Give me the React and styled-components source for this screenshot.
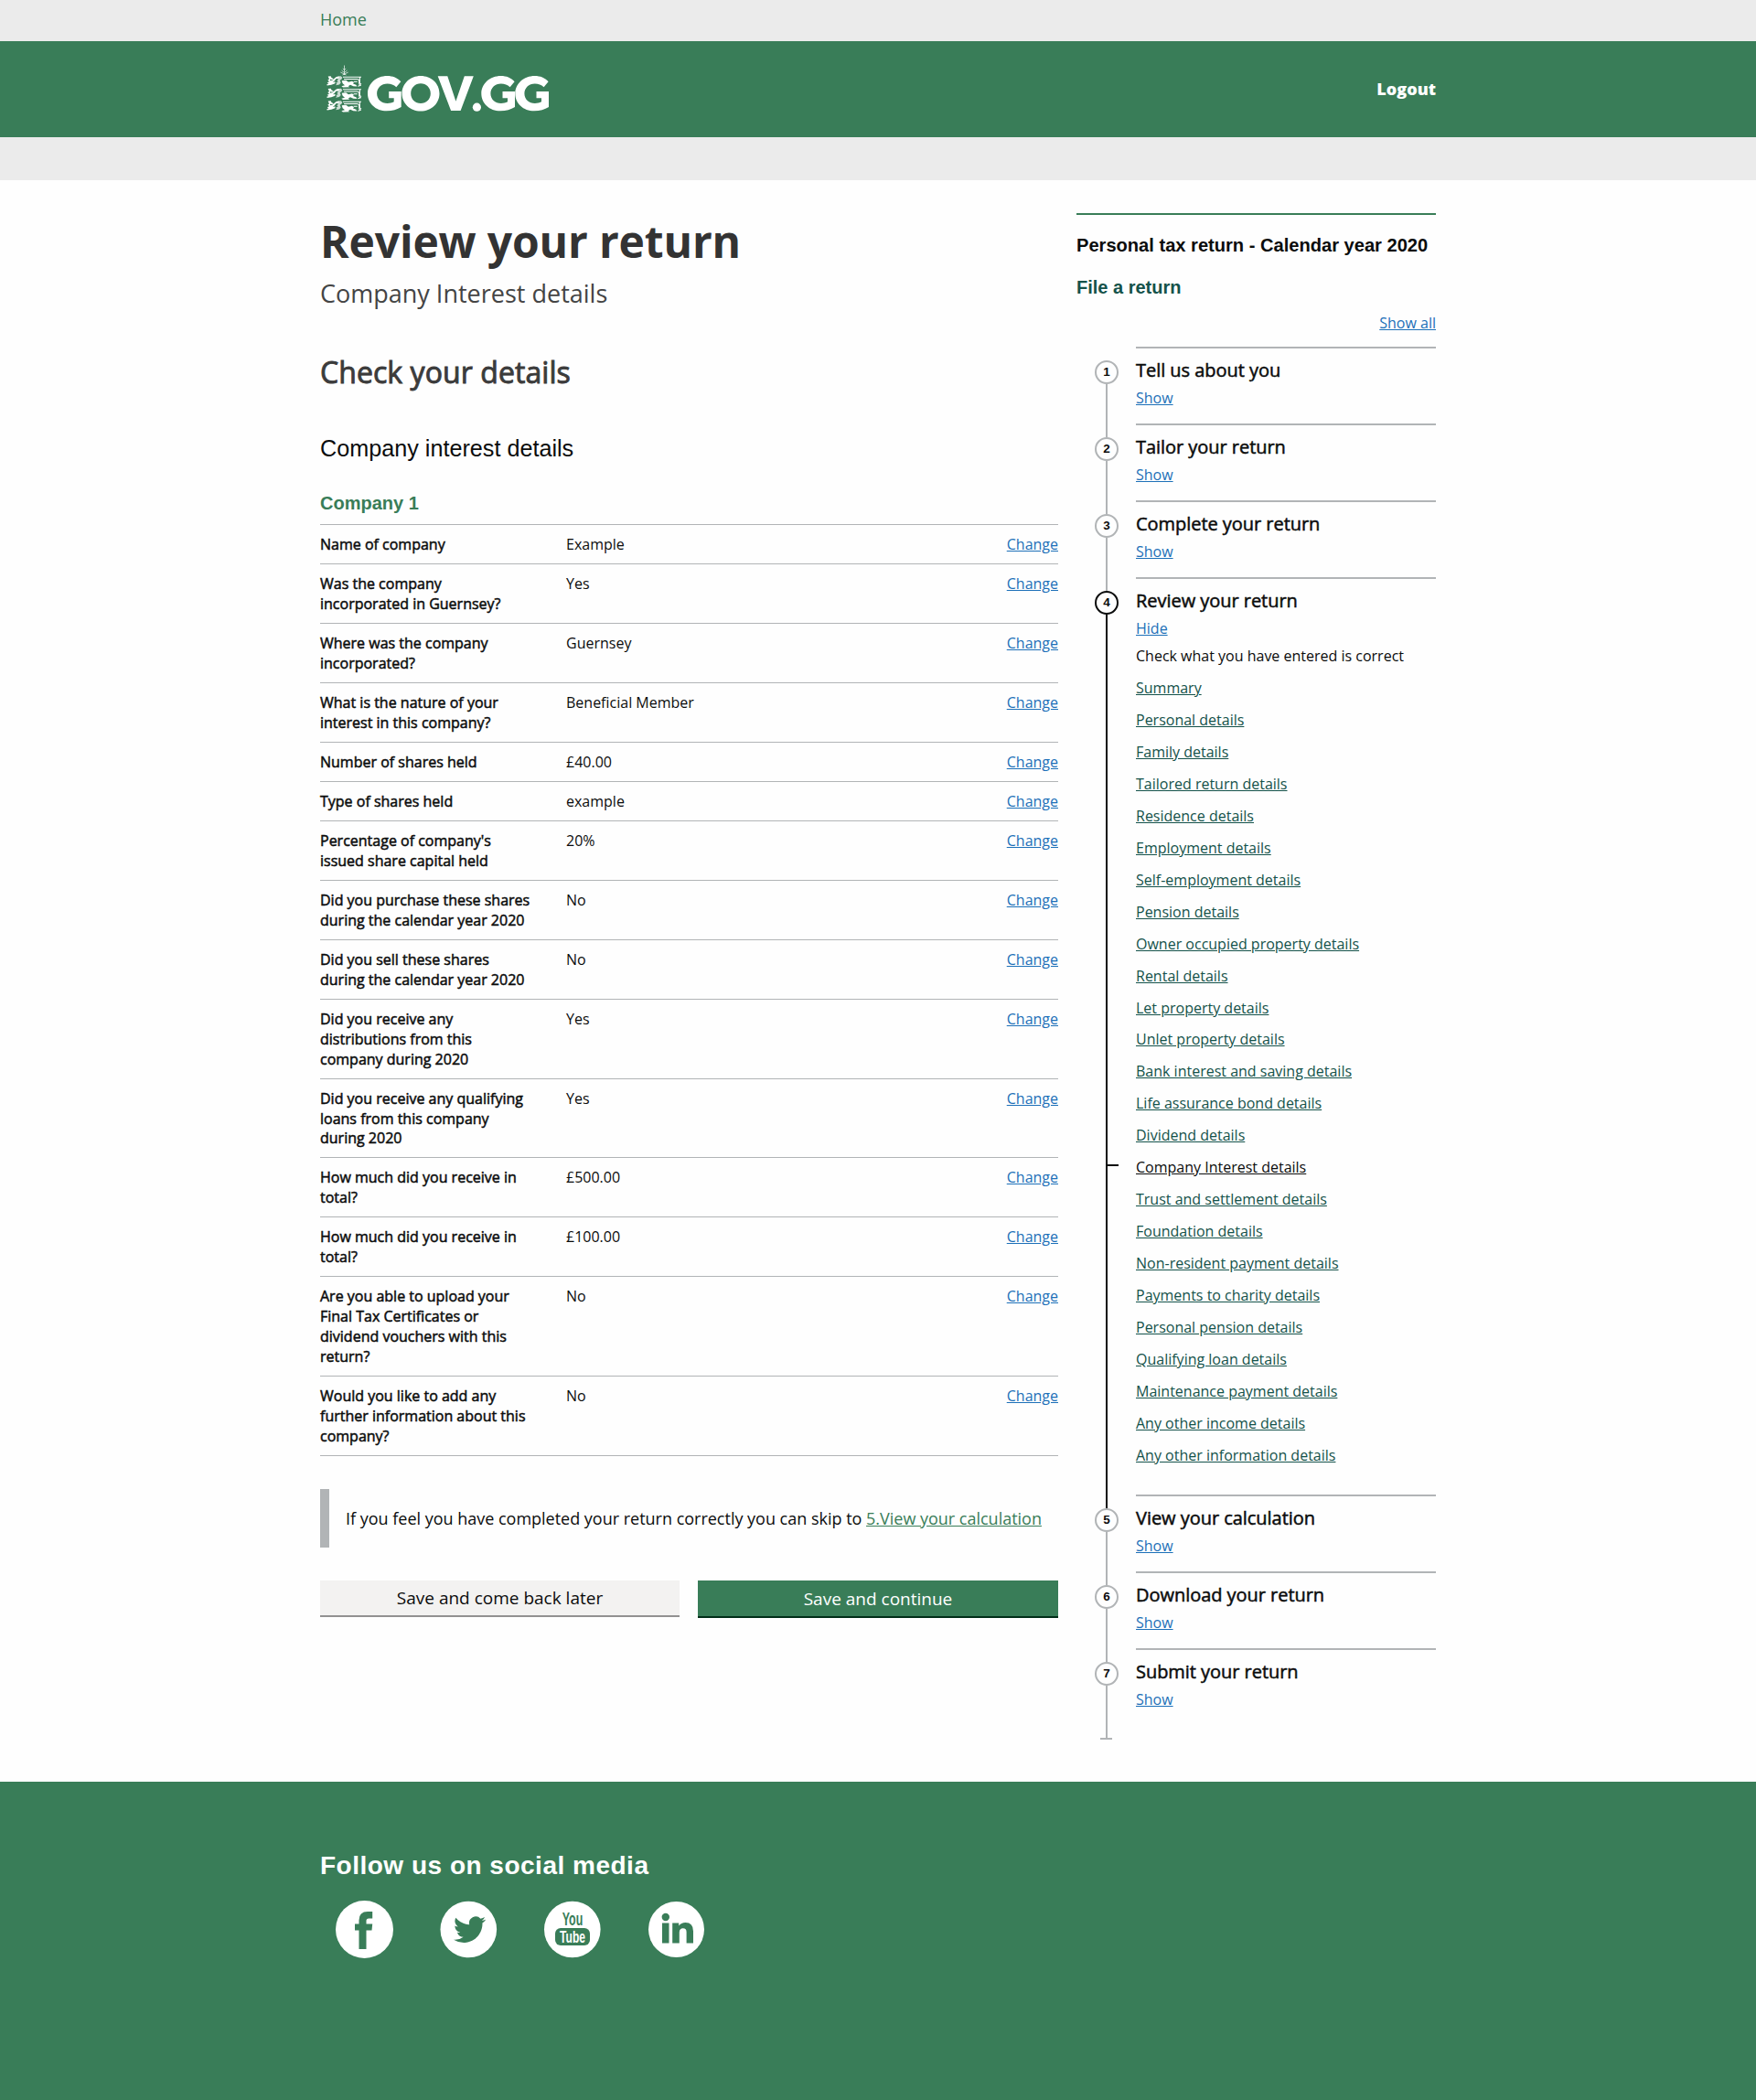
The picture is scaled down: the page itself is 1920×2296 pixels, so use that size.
import React from 'react';
import styled, { createGlobalStyle, css } from 'styled-components';

const green = '#397d58';
const grey = '#b1b4b6';
const sans = "'Open Sans', 'Noto Sans', sans-serif";
const arial = "'Liberation Sans', Arial, sans-serif";

const GlobalStyle = createGlobalStyle`
  * { box-sizing: border-box; }
  body { margin: 0; background: #fefefe; color: #0b0c0c; font-family: ${sans}; }
  h1, h2, h3, p, ul, ol, dl, dd, dt { margin: 0; padding: 0; font-weight: 400; }
  ol, ul { list-style: none; }
  a { color: inherit; }
`;

const heavier = css`-webkit-text-stroke: 0.5px currentColor;`;

const Container = styled.div`width: 1220px; margin: 0 auto;`;
const TopBar = styled.nav`height: 45px; background: #ebebeb;`;
const HomeLink = styled.a`
  display: block; padding-top: 9px; font-size: 18px; line-height: 25px;
  color: ${green}; text-decoration: none;
`;
const Header = styled.header`height: 105px; background: ${green};`;
const HeaderRow = styled(Container)`display: flex; justify-content: space-between; height: 105px;`;
const Brand = styled.svg`width: 255px; height: 105px; display: block;`;
const Logout = styled.a`
  padding-top: 40px; color: #fff; font-size: 18px; font-weight: 800;
  line-height: 25px; text-decoration: none;
`;
const SubBar = styled.div`height: 47px; background: #ebebeb;`;

const Columns = styled(Container)`
  display: grid; grid-template-columns: 807px 393px; column-gap: 20px; height: 1751px;
`;
const Main = styled.main`padding-top: 35px;`;
const Title = styled.h1`
  font-size: 48px; line-height: 64px; letter-spacing: -0.15px; color: #333; && { font-weight: 700; }
`;
const Caption = styled.p`margin-top: 7px; font-size: 27px; line-height: 36px; color: #444;`;
const Subtitle = styled.h2`
  margin-top: 46px; font-size: 32px; line-height: 44px; letter-spacing: 0.07px; color: #3b3b3b;
  -webkit-text-stroke: 0.9px currentColor;
`;
const Section = styled.h2`margin-top: 46px; font-family: ${arial}; font-size: 25.2px; line-height: 30px;`;
const Company = styled.h3`
  margin-top: 33px; font-family: ${arial}; font-size: 20px; line-height: 25px;
  color: ${green}; && { font-weight: 700; }
`;
const Summary = styled.dl`margin-top: 10.1px; border-top: 1px solid ${grey};`;
const Row = styled.div`
  display: grid; grid-template-columns: 269px 1fr auto; padding: 11px 0 9px;
  border-bottom: 1px solid ${grey}; font-size: 16px; line-height: 21.97px;
`;
const Key = styled.dt`${heavier} white-space: pre-line;`;
const BlueLink = styled.a`color: #1d70b8; text-decoration: underline;`;
const Inset = styled.p`
  margin-top: 36px; padding: 20px 0 0 18px; height: 64px; border-left: 10px solid ${grey};
  font-size: 18px; line-height: 25px; letter-spacing: -0.01px; white-space: nowrap;
  a { color: ${green}; }
`;
const Buttons = styled.div`margin-top: 36px; display: flex; gap: 20px; align-items: flex-start;`;
const Button = styled.button`
  width: ${p => (p.$primary ? 394 : 393)}px; height: ${p => (p.$primary ? 41 : 40)}px; border: 0;
  padding: ${p => (p.$primary ? 1 : 0)}px 0 0;
  border-bottom: 2px solid ${p => (p.$primary ? '#002d18' : '#929191')};
  background: ${p => (p.$primary ? green : '#f3f2f1')};
  color: ${p => (p.$primary ? '#fff' : '#0b0c0c')};
  font: 19px/25px ${sans};
`;

const Aside = styled.aside`padding-top: 36px;`;
const AsideTitle = styled.h2`
  border-top: 2px solid ${green}; padding-top: 21px; font-family: ${arial};
  font-size: 20.1px; line-height: 25px; white-space: nowrap; && { font-weight: 700; }
`;
const FileReturn = styled.h2`
  margin-top: 21px; font-family: ${arial}; font-size: 20px; line-height: 25px;
  color: #14524a; && { font-weight: 700; }
`;
const ShowAll = styled.p`margin-top: 15px; text-align: right; font-size: 16px; line-height: 22px;`;
const Steps = styled.ol`margin-top: 15px;`;
const Step = styled.li`
  display: grid; grid-template-columns: 65px 1fr; height: ${p => p.$height}px;
`;
const Rail = styled.div`
  display: flex; flex-direction: column; align-items: center; width: 26px; margin-left: 20px;
  padding-top: 15px; height: ${p => p.$height + 15}px;
`;
const Bullet = styled.span`
  flex: none; width: 26px; height: 26px; border-radius: 50%;
  border: 2px solid ${p => (p.$active ? '#0b0c0c' : grey)};
  font: 700 13.5px/22px ${arial}; text-align: center;
`;
const Line = styled.span`flex: 1; width: 2px; background: ${p => (p.$active ? '#0b0c0c' : grey)};`;
const EndCap = styled.span`width: 13px; height: 2px; margin-right: 1px; background: ${grey};`;
const StepBody = styled.div`border-top: 2px solid ${grey};`;
const StepTitle = styled.h3`margin-top: 10px; font-size: 20px; line-height: 28px; letter-spacing: -0.04px; ${heavier}`;
const Toggle = styled(BlueLink)`display: block; width: max-content; margin-top: 5px; font-size: 16px; line-height: 22px;`;
const Hint = styled.p`margin-top: 8px; font-size: 16px; line-height: 22px;`;
const Links = styled.ul`margin-top: 13px; font-size: 16px; line-height: 22px;`;
const LinkItem = styled.li`
  position: relative; height: 34.96px; color: ${p => (p.$current ? '#0b0c0c' : '#14524a')};
  ${p => p.$current && css`
    &::before {
      content: ''; position: absolute; left: -32px; top: 8px; width: 13px; height: 2px; background: #0b0c0c;
    }
  `}
`;

const Footer = styled.footer`height: 348px; background: ${green}; color: #fff; padding-top: 76px;`;
const FooterTitle = styled.h2`
  font-family: ${arial}; font-size: 28px; line-height: 32px; letter-spacing: 0.5px; && { font-weight: 700; }
`;
const Social = styled.div`display: flex; margin: 21px 0 0 16px; gap: 50px;`;
const SocialIcon = styled.svg`width: 64px; height: 64px; display: block;`;

const rows = [
  ['Name of company', 'Example'],
  ['Was the company\nincorporated in Guernsey?', 'Yes'],
  ['Where was the company\nincorporated?', 'Guernsey'],
  ['What is the nature of your\ninterest in this company?', 'Beneficial Member'],
  ['Number of shares held', '£40.00'],
  ['Type of shares held', 'example'],
  ["Percentage of company's\nissued share capital held", '20%'],
  ['Did you purchase these shares\nduring the calendar year 2020', 'No'],
  ['Did you sell these shares\nduring the calendar year 2020', 'No'],
  ['Did you receive any\ndistributions from this\ncompany during 2020', 'Yes'],
  ['Did you receive any qualifying\nloans from this company\nduring 2020', 'Yes'],
  ['How much did you receive in\ntotal?', '£500.00'],
  ['How much did you receive in\ntotal?', '£100.00'],
  ['Are you able to upload your\nFinal Tax Certificates or\ndividend vouchers with this\nreturn?', 'No'],
  ['Would you like to add any\nfurther information about this\ncompany?', 'No'],
];

const links = [
  'Summary', 'Personal details', 'Family details', 'Tailored return details', 'Residence details',
  'Employment details', 'Self-employment details', 'Pension details', 'Owner occupied property details',
  'Rental details', 'Let property details', 'Unlet property details', 'Bank interest and saving details',
  'Life assurance bond details', 'Dividend details', 'Company Interest details',
  'Trust and settlement details', 'Foundation details', 'Non-resident payment details',
  'Payments to charity details', 'Personal pension details', 'Qualifying loan details',
  'Maintenance payment details', 'Any other income details', 'Any other information details',
];

const steps = [
  'Tell us about you', 'Tailor your return', 'Complete your return', 'Review your return',
  'View your calculation', 'Download your return', 'Submit your return',
];

const Lion = ({ y }) => (
  <g transform={`translate(8 ${y}) scale(.3333)`} fill="#fff">
    <path d="M2 3l9-1 2 5 7 4-5 3-5-2-2 5 8-1 12-11 12-2-4 6-8 2-5 7-6 4 9-1-1 5-12 5-14 2-1-4 6-2-5-4 7-3-5-5 5-3z" />
    <path d="M31 4l13-2 5 5-3 6-5 3 3 8-5 6-12 2 4-5-3-3 7-2-4-5 5-4-6-4z" opacity=".75" />
    <path
      d="M51 5h60M54 12h42q8 0 8 6v8q0 5 6 6l-10 3M106 5v20l5 4M86 20h12"
      fill="none" stroke="#fff" strokeWidth="3.200"
    />
    <path d="M47 17l14-1 8 6 12-3 6 4-3 4 10 4 3 5-12-1-10-4-7 4 5 3-22 1-5-4 11-3-7-6z" />
  </g>
);

const LetterG = ({ x }) => (
  <path
    transform={`translate(${x} 0)`}
    fill="#fff"
    d="M36.300 44.300C32.500 40 27.500 38 21.300 38C9.500 38 0 46.500 0 57.200C0 68 8.800 76.300 20.800 76.300C27 76.300 32.300 74.800 36.700 72V55H23.200V62.300H28.700V66.300C26.600 67.500 24.300 68 21.600 68C15 68 10.100 63.500 10.100 57.200C10.100 51 15 46.400 21.500 46.400C25.600 46.400 28.500 47.600 31.300 50.200Z"
  />
);

const Logo = () => (
  <Brand viewBox="0 0 255 105">
    <path
      fill="none" stroke="#fff" strokeWidth=".9" opacity=".75"
      d="M26.500 26.500v10.500M24.800 30l1.700 1.500 1.700-1.500M23.500 32l3 2.500 3-2.500M22.300 34l4.200 2 4.200-2M24.500 37l2-1 2 1"
    />
    <Lion y={37.500} /><Lion y={51} /><Lion y={64.500} />
    <LetterG x={52} />
    <path
      fill="#fff" fillRule="evenodd"
      d="M110 38C121.500 38 130.500 46.300 130.500 57.200S121.500 76.500 110 76.500S89.500 68 89.500 57.200S98.500 38 110 38ZM110 46.300C104 46.300 99.200 51 99.200 57.200S104 68 110 68S120.800 63.500 120.800 57.200S116 46.300 110 46.300Z"
    />
    <path d="M128.700 38.200h10.600l9.100 27.600 9.400-27.600h10l-14.200 37.800h-10.500z" fill="#fff" />
    <circle cx="171.400" cy="72.200" r="4.600" fill="#fff" />
    <LetterG x={176.300} />
    <LetterG x={213.300} />
  </Brand>
);

const Facebook = () => (
  <SocialIcon viewBox="0 0 64 64">
    <circle cx="32.500" cy="32.500" r="31.500" fill="#fff" />
    <path d="M26.500 54V33.500h-4.500v-7h4.500v-4q0-9.500 9.500-9.500h5.200v7.500h-4q-2.700 0-2.700 2.500v3.500h6.700l-.7 7h-6v20.500z" fill={green} />
  </SocialIcon>
);
const Twitter = () => (
  <SocialIcon viewBox="0 0 64 64">
    <circle cx="32.300" cy="32.500" r="30.800" fill="#fff" />
    <path transform="translate(16 15.200) scale(1.46)" fill={green} d="M23.950 4.570a10 10 0 0 1-2.820.77 4.960 4.960 0 0 0 2.160-2.720c-.95.550-2 .950-3.130 1.180a4.920 4.920 0 0 0-8.380 4.480C7.690 8.090 4.070 6.130 1.640 3.160a4.920 4.920 0 0 0 1.520 6.570 4.900 4.900 0 0 1-2.230-.61v.06a4.920 4.920 0 0 0 3.950 4.830 5 5 0 0 1-2.210.08 4.940 4.940 0 0 0 4.600 3.420A9.870 9.870 0 0 1 0 19.540a13.990 13.990 0 0 0 7.550 2.210c9.050 0 14-7.500 14-13.980 0-.21 0-.42-.02-.63a9.940 9.940 0 0 0 2.460-2.550z" />
  </SocialIcon>
);
const CondensedText = styled.text`font-family: ${arial}; font-weight: 700; text-anchor: middle;`;
const YouTube = () => (
  <SocialIcon viewBox="0 0 64 64">
    <circle cx="31.800" cy="32.500" r="30.800" fill="#fff" />
    <CondensedText transform="translate(32 27.700) scale(.62 1)" fontSize="20" fill={green}>You</CondensedText>
    <rect x="13" y="31" width="38" height="19" rx="6" fill={green} />
    <CondensedText transform="translate(32 46.500) scale(.67 1)" fontSize="18" fill="#fff">Tube</CondensedText>
  </SocialIcon>
);
const LinkedIn = () => (
  <SocialIcon viewBox="0 0 64 64">
    <circle cx="31.500" cy="32.500" r="30.500" fill="#fff" />
    <circle cx="19.800" cy="19" r="4.200" fill={green} />
    <path d="M16 25.500h7.500v22h-7.500zM27.200 25.500h7v3q2.500-3.500 7.300-3.500 8.500 0 8.500 9.500v13h-7.400v-12q0-4.200-3.800-4.200-4 0-4 4.500v11.700h-7.600z" fill={green} />
  </SocialIcon>
);

export default function App() {
  return (
    <>
      <GlobalStyle />
      <TopBar><Container><HomeLink>Home</HomeLink></Container></TopBar>
      <Header><HeaderRow><Logo /><Logout>Logout</Logout></HeaderRow></Header>
      <SubBar />
      <Columns>
        <Main>
          <Title>Review your return</Title>
          <Caption>Company Interest details</Caption>
          <Subtitle>Check your details</Subtitle>
          <Section>Company interest details</Section>
          <Company>Company 1</Company>
          <Summary>
            {rows.map(([label, value], i) => (
              <Row key={i}>
                <Key>{label}</Key>
                <dd>{value}</dd>
                <dd><BlueLink>Change</BlueLink></dd>
              </Row>
            ))}
          </Summary>
          <Inset>If you feel you have completed your return correctly you can skip to <a href="#calculation">5.View your calculation</a></Inset>
          <Buttons>
            <Button>Save and come back later</Button>
            <Button $primary>Save and continue</Button>
          </Buttons>
        </Main>
        <Aside>
          <AsideTitle>Personal tax return - Calendar year 2020</AsideTitle>
          <FileReturn>File a return</FileReturn>
          <ShowAll><BlueLink>Show all</BlueLink></ShowAll>
          <Steps>
            {steps.map((name, i) => {
              const active = i === 3;
              const last = i === steps.length - 1;
              const height = active ? 1003 : 84;
              return (
                <Step key={name} $height={height}>
                  <Rail $height={last ? 85 : height}>
                    <Bullet $active={active}>{i + 1}</Bullet>
                    <Line $active={active} />
                    {last && <EndCap />}
                  </Rail>
                  <StepBody>
                    <StepTitle>{name}</StepTitle>
                    <Toggle>{active ? 'Hide' : 'Show'}</Toggle>
                    {active && (
                      <>
                        <Hint>Check what you have entered is correct</Hint>
                        <Links>
                          {links.map((text, n) => (
                            <LinkItem key={text} $current={n === 15}><a href="#section">{text}</a></LinkItem>
                          ))}
                        </Links>
                      </>
                    )}
                  </StepBody>
                </Step>
              );
            })}
          </Steps>
        </Aside>
      </Columns>
      <Footer>
        <Container>
          <FooterTitle>Follow us on social media</FooterTitle>
          <Social><Facebook /><Twitter /><YouTube /><LinkedIn /></Social>
        </Container>
      </Footer>
    </>
  );
}
